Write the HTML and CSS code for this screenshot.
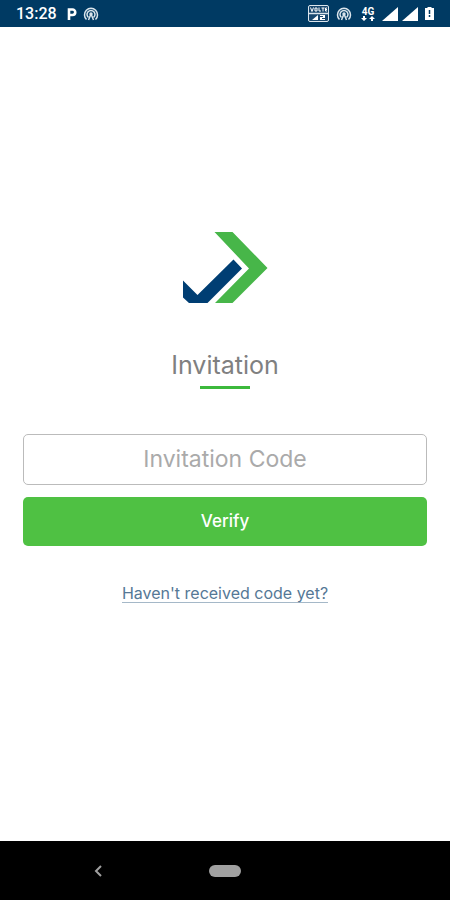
FILE: index.html
```html
<!DOCTYPE html>
<html lang="en">
<head>
    <meta charset="UTF-8">
    <meta name="viewport" content="width=device-width, initial-scale=1.0">
    <title>Invitation</title>
    <link rel="stylesheet" href="styles.css">
</head>
<body>
    <header class="status-bar">
        <div class="status-left">
            <span class="clock">13:28</span>
            <svg class="parking" width="10" height="12" viewBox="0 0 10 12">
                <path d="M2 12V1.5h3.5a2.5 2.5 0 0 1 0 5.500H2" fill="none" stroke="#fff" stroke-width="2.6"/>
            </svg>
            <svg width="16" height="14" viewBox="0 0 16 14" fill="none" stroke="#dbe5ec" stroke-width="1.5">
                <path d="M3.5 12.5a6.5 6.5 0 1 1 9 0M5.5 10.5a4 4 0 1 1 5 0"/>
                <path d="M8 7l-2.5 6M8 7l2.5 6"/>
                <circle cx="8" cy="7" r="1" fill="#dbe5ec"/>
            </svg>
        </div>
        <div class="status-right">
            <svg width="21" height="17" viewBox="0 0 21 17">
                <rect x=".5" y=".5" width="20" height="16" rx="1.5" fill="#17466d" stroke="#dbe5ec"/>
                <path d="M2.5 2.500l1.500 4 1.500-4M7 3h2v3H7zM11 2.500V6h2M13.500 3h3M15 3v3.500M19 3h-1.500v3H19M17.500 4.500H19" fill="none" stroke="#fff"/>
                <path d="M1 8.5h19" stroke="#dbe5ec" stroke-width="1.5"/>
                <path d="M4 15l6-5v5zM12 10h5v3h-3v1h3v1h-5v-3h3v-1h-3z" fill="#fff"/>
            </svg>
            <svg class="hotspot" width="16" height="14" viewBox="0 0 16 14" fill="none" stroke="#dbe5ec" stroke-width="1.5">
                <path d="M3.5 12.5a6.5 6.5 0 1 1 9 0M5.5 10.5a4 4 0 1 1 5 0"/>
                <path d="M8 7l-2.5 6M8 7l2.5 6"/>
                <circle cx="8" cy="7" r="1" fill="#dbe5ec"/>
            </svg>
            <div class="network">
                <span>4G</span>
                <svg width="14" height="5" viewBox="0 0 14 5" fill="#fff">
                    <path d="M0 2h2V0h2v2h2L3 5zM8 3l3-3 3 3h-2v2h-2V3z"/>
                </svg>
            </div>
            <svg class="signal" width="16" height="14" viewBox="0 0 16 14"><path d="M0 14L16 0v14z" fill="#fff"/></svg>
            <svg class="signal" width="16" height="14" viewBox="0 0 16 14"><path d="M0 14L16 0v14z" fill="#fff"/></svg>
            <svg class="battery" width="9" height="13" viewBox="0 0 9 13">
                <path d="M0 1h2.5V0h4v1H9v12H0z" fill="#fff"/>
                <path d="M4.5 3v4M4.5 8v2" stroke="#003a63" stroke-width="1.5"/>
            </svg>
        </div>
    </header>

    <main class="container">
        <svg class="logo" width="85" height="71" viewBox="0 0 85 71">
            <path d="M31.5 0h18L84.5 36 49.5 71H32l34-34.5z" fill="#47b649"/>
            <path d="M50.5 27.5l8.500 9L24.5 71H6L0 65.500V48.500l14.500 14.500z" fill="#003e73"/>
        </svg>
        <h1 class="title">Invitation</h1>
        <form class="invite-form">
            <input type="text" class="code-input" placeholder="Invitation Code" aria-label="Invitation Code">
            <button type="button" class="verify-btn">Verify</button>
        </form>
        <a href="#" class="help-link">Haven't received code yet?</a>
    </main>

    <nav class="nav-bar">
        <button type="button" class="nav-btn" aria-label="Back">
            <svg width="8" height="12" viewBox="0 0 8 12"><path d="M7 1L2 6l5 5" fill="none" stroke="#a0a0a0" stroke-width="2"/></svg>
        </button>
        <button type="button" class="nav-btn" aria-label="Home"><span class="home-pill"></span></button>
    </nav>
</body>
</html>
```

FILE: styles.css
```css
:root {
    --navy: #003a63;
    --green: #4fc143;
    --link: #557896;
}

* {
    margin: 0;
    padding: 0;
    box-sizing: border-box;
}

body {
    min-height: 100vh;
    display: flex;
    flex-direction: column;
    background: #fff;
    font-family: Inter, "Open Sans", sans-serif;
}

svg {
    display: block;
}

.status-bar {
    display: flex;
    justify-content: space-between;
    align-items: center;
    height: 27px;
    padding: 0 16px;
    background: var(--navy);
    color: #fff;
}

.status-left,
.status-right {
    display: flex;
    align-items: center;
}

.clock {
    font: 500 16px/20px Roboto, sans-serif;
}

.parking {
    margin-left: 10px;
    margin-right: 6px;
}

.hotspot {
    margin-left: 7px;
}

.network {
    display: flex;
    flex-direction: column;
    align-items: center;
    margin-left: 9px;
    font: 700 10px/9px Roboto, sans-serif;
}

.signal {
    margin-left: 7px;
}

.signal + .signal {
    margin-left: 4px;
}

.battery {
    margin-left: 7px;
}

.container {
    flex: 1;
    display: flex;
    flex-direction: column;
    align-items: center;
    justify-content: center;
    padding: 0 23px 34px;
}

.title {
    display: flex;
    flex-direction: column;
    align-items: center;
    margin-top: 46px;
    color: #808080;
    font-size: 25px;
    font-weight: 400;
    line-height: 32px;
}

.title::after {
    content: "";
    width: 50px;
    height: 3px;
    margin-top: 5px;
    background: #3cb93c;
}

.invite-form {
    display: flex;
    flex-direction: column;
    gap: 12px;
    width: 100%;
    margin-top: 45px;
}

.code-input {
    width: 100%;
    height: 51px;
    border: 1px solid #bbb;
    border-radius: 5px;
    background: #fff;
    color: #555;
    font-family: inherit;
    font-size: 23px;
    text-align: center;
}

.code-input::placeholder {
    color: #aaa;
}

.verify-btn {
    height: 49px;
    border: none;
    border-radius: 5px;
    background: var(--green);
    color: #fff;
    font-family: inherit;
    font-size: 17px;
    font-weight: 500;
    cursor: pointer;
}

.help-link {
    margin-top: 39px;
    border-bottom: 1px solid #a5b8c8;
    color: var(--link);
    font-size: 16px;
    line-height: 17px;
    text-decoration: none;
}

.nav-bar {
    display: grid;
    grid-template-columns: 1fr 1fr 1fr;
    align-items: center;
    height: 59px;
    padding: 0 34px;
    background: #000;
}

.nav-btn {
    display: flex;
    justify-content: center;
    border: none;
    background: none;
    cursor: pointer;
}

.home-pill {
    width: 32px;
    height: 12px;
    border-radius: 6px;
    background: #a0a0a0;
}
```
